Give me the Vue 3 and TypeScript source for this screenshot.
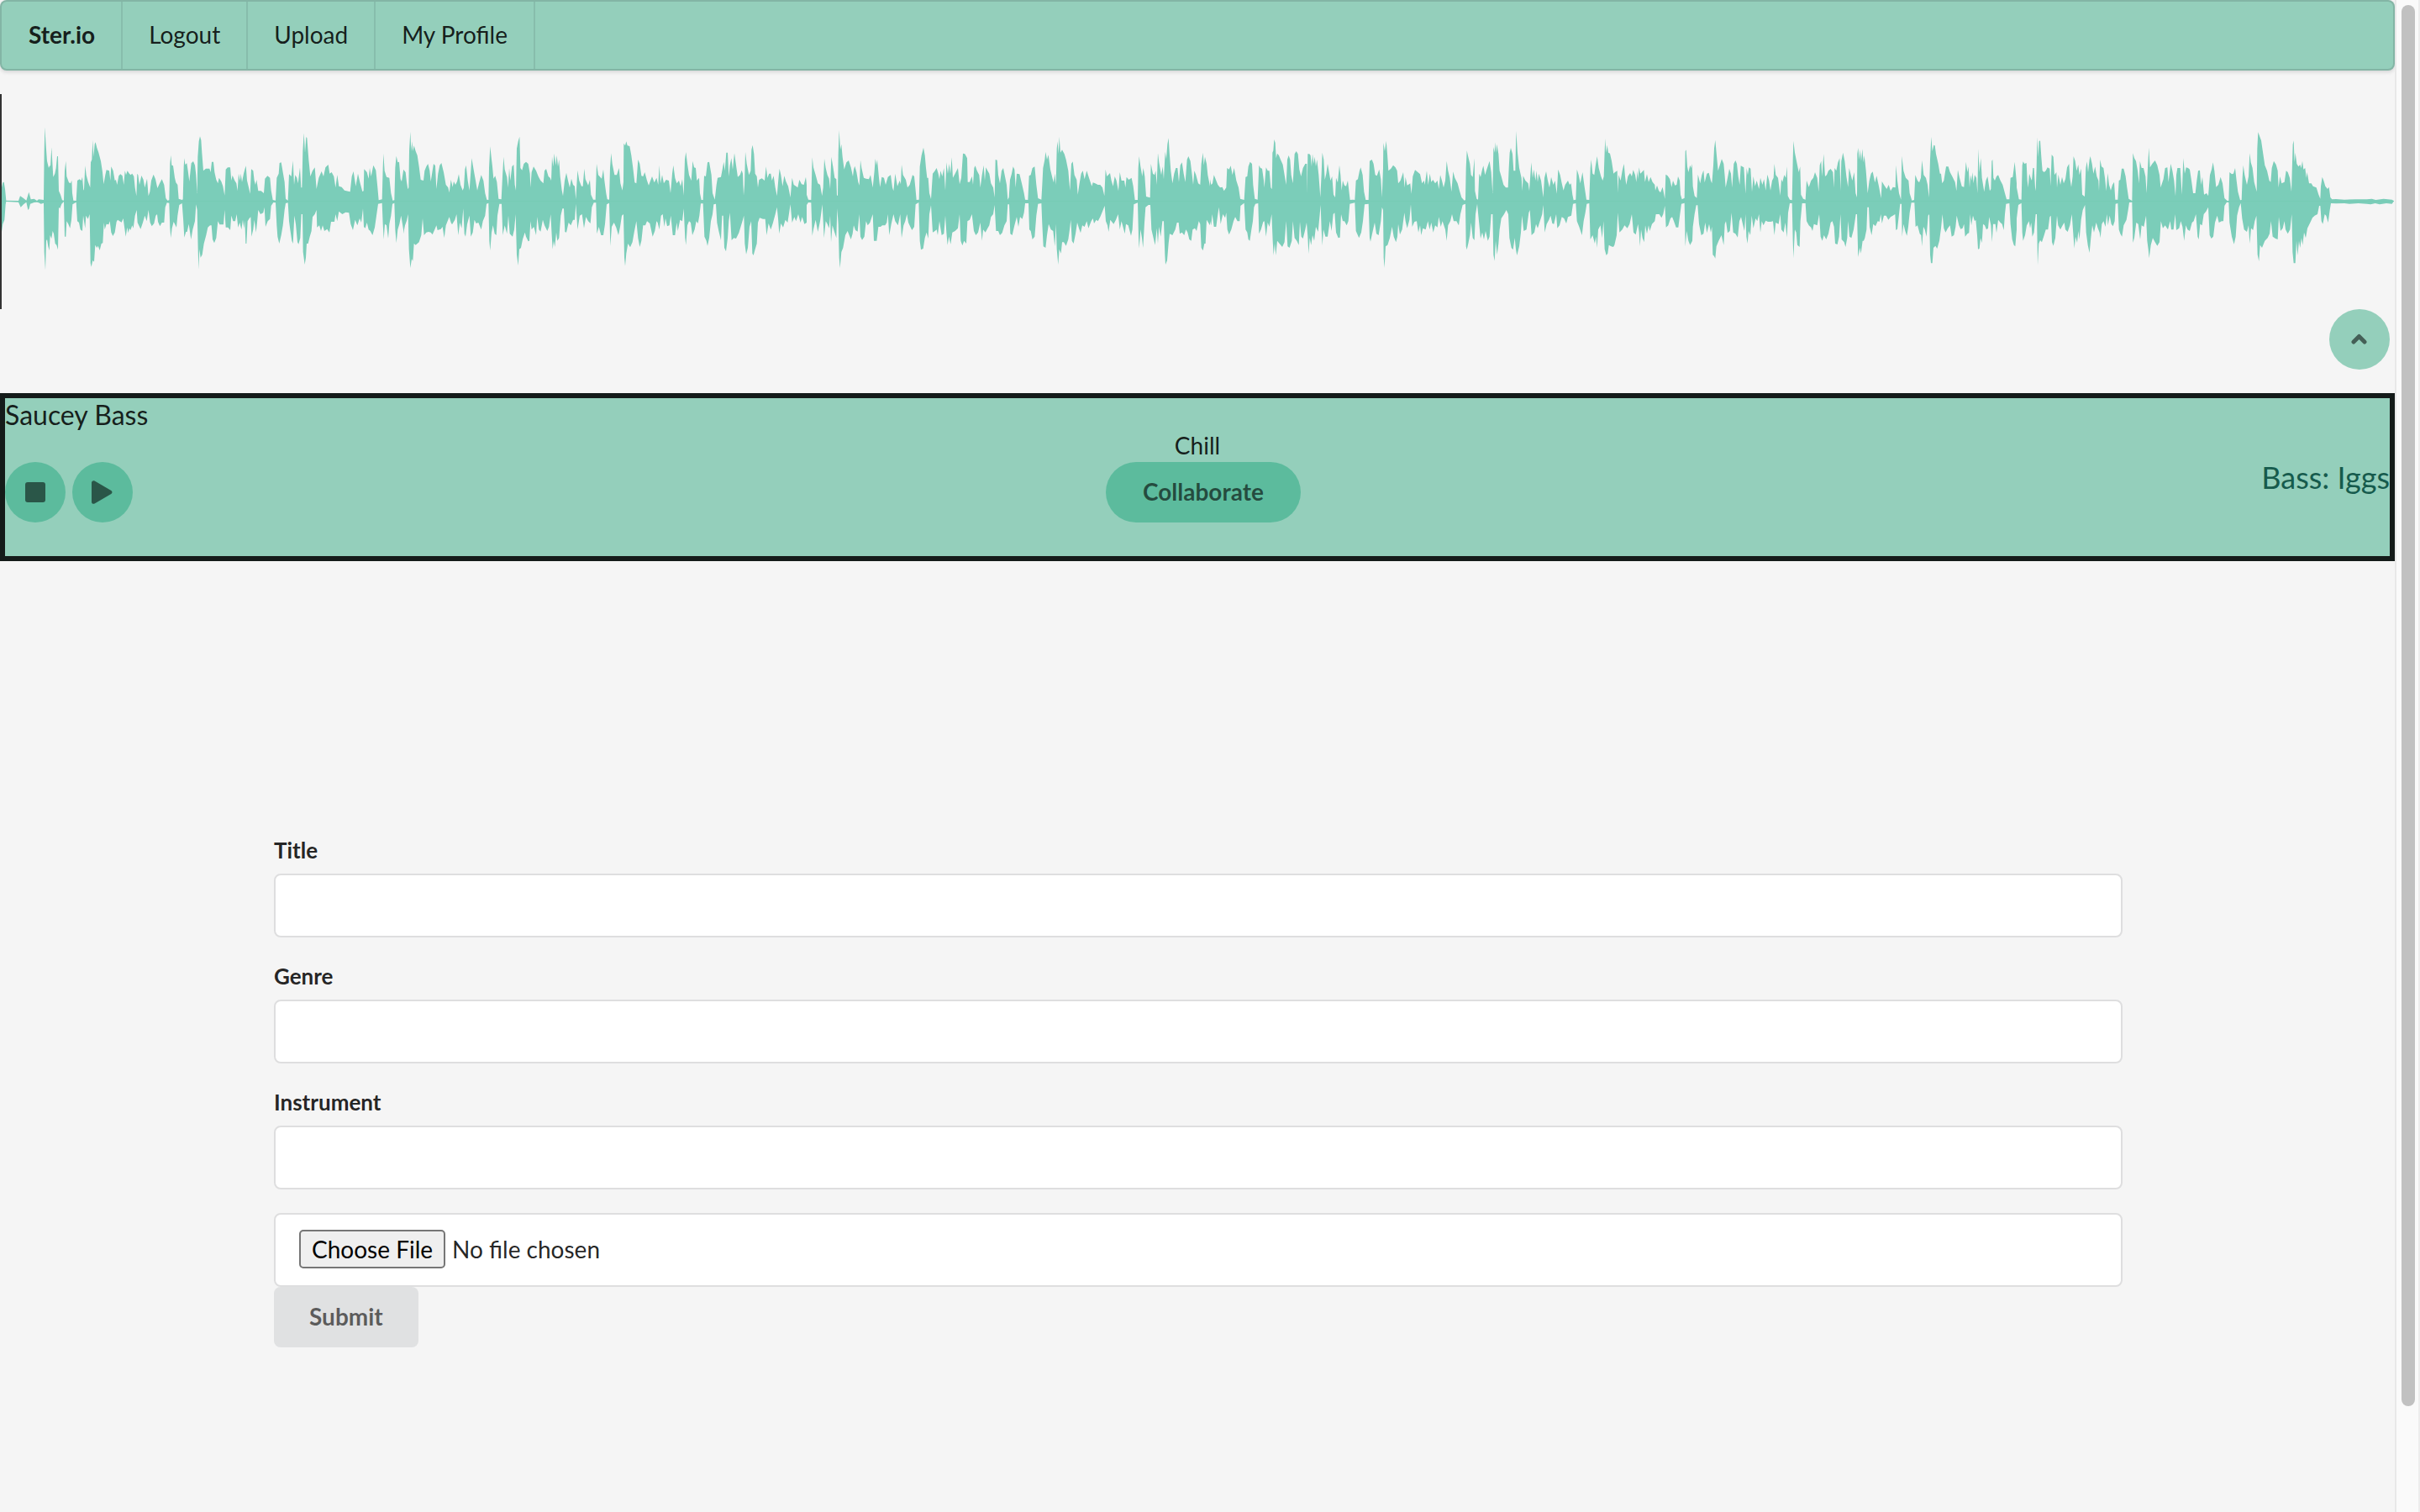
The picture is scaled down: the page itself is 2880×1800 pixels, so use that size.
<script setup lang="ts">
import { computed, ref } from 'vue'

interface Slice {
  top: string
  bottom: string
}

const navLinks = ['Logout', 'Upload', 'My Profile']

const title = ref('')
const genre = ref('')
const instrument = ref('')

const fields = [
  { id: 'title', label: 'Title', model: title },
  { id: 'genre', label: 'Genre', model: genre },
  { id: 'instrument', label: 'Instrument', model: instrument },
]

// Peaks of the track, in slices of 1440 units: upper and lower envelope as x,y pairs.
const SLICE = 1440
const slices: Slice[] = [
  {
    top: '6,250 10,232 14,230 18,255 22,296 66,297 72,280 84,288 94,296 103,266 110,292 122,290 132,297 138,292 156,294 158,120 160,34 164,100 168,155 174,180 178,170 180,175 184,106 187,160 190,212 196,200 200,180 204,138 207,138 210,262 216,275 222,295 228,296 231,190 235,155 238,210 246,232 252,235 256,224 258,270 262,296 272,297 276,225 284,220 290,225 294,212 298,260 300,256 304,172 308,205 314,228 322,250 324,160 328,150 331,80 334,140 338,95 341,88 346,108 352,125 360,155 366,195 370,238 376,205 380,187 390,190 394,225 397,175 404,190 410,225 414,222 418,240 424,208 430,202 437,208 442,240 446,190 450,205 455,190 460,198 466,205 472,200 478,210 482,250 487,280 490,200 493,205 498,240 505,207 512,222 517,250 525,218 530,280 535,265 540,225 548,203 555,220 562,252 570,235 578,220 586,240 592,288 598,296 604,295 607,165 610,134 613,170 618,172 624,215 628,232 634,240 638,290 650,294 653,292 656,175 658,145 661,168 667,163 671,190 676,228 680,190 683,163 690,156 696,170 700,205 704,270 706,140 710,85 714,67 718,80 721,125 726,190 735,182 748,182 752,195 756,158 762,158 766,195 772,222 778,235 782,215 790,228 796,245 802,278 806,185 813,178 822,178 826,225 830,206 838,225 844,235 848,262 852,200 857,225 860,200 864,230 870,200 874,185 878,172 882,225 888,250 893,272 897,184 904,190 908,225 912,240 916,222 922,262 932,262 942,270 946,218 955,208 964,215 968,260 974,294 984,296 988,215 995,200 998,162 1004,160 1010,195 1016,230 1020,290 1028,296 1032,202 1040,210 1046,154 1050,240 1054,205 1060,215 1064,235 1071,178 1075,250 1078,250 1081,120 1085,55 1089,125 1093,70 1096,72 1102,150 1108,210 1116,190 1124,178 1130,255 1138,215 1148,192 1155,210 1162,178 1172,168 1177,200 1184,195 1192,210 1198,250 1204,205 1210,245 1220,248 1230,260 1250,265 1256,210 1262,192 1270,245 1278,200 1286,235 1294,264 1298,262 1300,184 1310,195 1316,218 1320,180 1325,210 1333,170 1342,188 1348,250 1352,295 1364,292 1367,180 1369,128 1373,190 1380,212 1390,215 1396,270 1402,296 1408,295 1411,180 1415,137 1420,160 1425,158 1430,220 1434,228 1440,190',
    bottom: '6,408 10,380 16,365 20,310 22,300 66,302 74,320 84,310 94,302 100,330 104,325 108,308 122,303 132,302 138,304 146,308 156,305 158,480 162,545 165,440 168,435 172,460 176,475 179,420 184,432 188,405 192,415 197,450 202,455 207,472 210,320 214,325 220,308 228,300 231,425 235,425 238,370 244,380 250,395 255,365 259,310 272,302 276,370 282,375 287,400 294,405 297,350 300,370 304,395 307,350 314,362 320,345 323,520 326,533 331,510 336,515 340,455 346,465 350,458 356,474 362,450 367,448 371,375 374,400 380,380 388,382 392,370 397,410 403,423 410,410 416,372 420,365 434,374 440,360 444,390 449,425 454,392 458,412 462,395 466,402 472,385 476,395 482,350 488,330 491,375 502,398 510,375 517,350 524,370 530,330 536,375 542,388 550,378 556,350 561,345 564,372 571,388 578,375 586,375 590,320 596,304 604,305 607,395 610,430 614,395 620,372 630,392 634,350 640,312 650,306 654,360 658,428 664,408 668,408 674,380 682,435 688,400 696,370 700,310 704,330 707,470 709,542 712,470 716,500 722,490 728,450 736,420 742,392 750,385 755,385 759,435 765,448 772,430 778,370 784,382 798,382 802,330 806,392 814,392 822,402 826,350 832,370 840,370 845,345 850,392 856,375 862,400 867,365 871,395 874,368 877,450 880,450 884,370 890,360 895,355 898,425 904,400 908,365 914,410 918,375 922,330 930,345 940,340 944,320 948,390 956,370 964,362 968,315 976,303 984,304 988,385 991,425 997,450 1004,420 1010,385 1016,330 1020,306 1028,304 1032,370 1036,400 1042,440 1046,450 1051,350 1056,380 1062,445 1066,452 1072,430 1076,345 1080,345 1082,480 1088,525 1092,500 1095,450 1100,450 1106,425 1112,405 1116,355 1124,345 1130,330 1132,392 1140,385 1146,405 1152,385 1158,405 1168,398 1176,410 1182,372 1194,372 1198,345 1204,370 1210,335 1222,345 1234,338 1246,340 1252,380 1260,402 1268,365 1276,385 1284,360 1290,375 1296,325 1299,390 1304,395 1310,375 1316,400 1322,405 1330,420 1338,392 1344,350 1350,308 1364,305 1367,380 1370,435 1374,380 1380,385 1386,432 1390,380 1396,350 1401,308 1408,305 1411,400 1415,448 1420,400 1426,380 1432,350 1440,400',
  },
  {
    top: '0,185 8,195 12,230 16,255 19,250 21,120 25,50 28,120 31,85 34,120 38,100 44,120 50,135 56,175 62,222 72,225 76,190 82,175 88,165 94,190 98,228 104,190 108,165 114,172 118,255 124,200 130,170 136,162 144,195 152,240 160,250 164,268 170,222 176,248 180,228 186,240 192,228 198,202 204,240 212,260 216,250 220,185 224,170 230,225 236,260 241,190 244,145 250,180 258,225 264,260 270,235 278,205 286,225 292,270 298,293 304,294 306,180 310,103 314,140 318,175 322,218 328,208 334,230 340,290 350,292 354,210 358,140 362,185 370,212 374,250 378,180 382,225 388,175 394,168 398,240 402,260 405,110 410,85 415,68 418,180 424,188 430,165 438,158 446,165 452,200 454,250 458,195 465,175 474,190 482,210 490,225 500,235 504,190 510,183 518,210 524,215 528,225 531,140 535,175 539,128 544,170 548,135 552,175 556,150 560,210 566,260 570,280 576,225 582,197 588,225 594,250 600,218 606,240 612,245 616,292 622,188 628,225 636,245 641,245 646,182 650,220 660,242 666,222 670,275 678,293 686,293 690,165 696,205 708,218 714,185 718,225 724,270 728,292 735,293 738,180 742,127 746,165 754,205 762,205 770,180 775,235 782,260 786,230 787,92 792,100 796,85 800,100 808,102 814,135 820,180 826,232 832,235 838,150 844,165 850,208 856,210 862,195 870,225 876,242 888,210 896,232 904,215 910,240 914,170 918,235 924,205 930,235 938,222 948,225 954,270 960,200 964,170 970,215 976,235 984,225 990,245 996,220 1001,278 1005,150 1009,123 1014,165 1020,205 1028,225 1033,155 1038,178 1044,180 1048,225 1056,215 1059,270 1064,294 1070,294 1074,208 1080,210 1086,160 1092,158 1100,205 1104,270 1112,293 1118,240 1122,215 1134,212 1140,180 1144,158 1148,190 1153,125 1158,125 1162,210 1166,170 1171,145 1176,185 1182,127 1188,170 1194,212 1202,205 1208,188 1212,200 1215,278 1218,240 1221,122 1226,165 1234,205 1240,190 1243,115 1247,98 1252,130 1256,200 1262,210 1266,250 1270,222 1280,217 1290,225 1295,175 1300,215 1306,200 1312,200 1316,225 1322,208 1328,250 1334,280 1340,210 1343,182 1348,205 1354,245 1360,208 1366,228 1374,245 1382,285 1388,215 1394,240 1402,245 1408,250 1414,222 1422,238 1430,240 1437,212 1440,240',
    bottom: '0,415 6,385 12,368 17,345 20,470 25,537 30,505 34,512 38,450 44,455 56,445 64,420 69,360 74,420 82,410 90,408 98,410 104,418 112,400 118,385 122,402 134,398 140,390 146,430 152,385 164,355 170,375 174,382 184,365 190,345 196,420 202,375 208,395 214,325 218,415 222,425 228,380 236,350 241,425 248,410 254,365 260,378 268,375 278,400 284,370 292,350 297,308 304,305 307,440 310,475 315,410 320,385 326,415 332,420 336,350 343,308 351,308 355,420 362,385 370,415 375,350 380,415 390,425 396,400 401,345 405,490 410,528 414,470 420,465 426,435 434,410 438,425 446,442 450,440 454,370 458,400 466,390 474,420 478,355 484,400 490,407 498,365 504,385 514,405 520,390 526,345 530,420 533,470 537,440 541,462 546,410 550,440 556,430 562,350 568,325 573,325 577,408 582,410 590,375 598,385 606,365 612,365 616,308 622,400 630,350 638,345 645,395 652,355 660,370 668,378 673,320 680,304 688,304 691,415 698,390 706,420 714,420 720,380 726,310 735,305 739,458 744,390 752,375 760,392 768,420 774,390 780,350 786,345 789,500 792,530 796,485 802,450 810,463 818,445 824,410 832,370 838,430 844,462 850,440 856,385 864,385 870,370 880,378 890,425 898,405 904,370 908,375 914,400 920,350 926,345 932,390 936,360 942,388 950,385 955,350 962,420 970,420 976,375 980,405 988,365 996,370 1001,325 1006,430 1009,455 1014,385 1020,370 1026,375 1032,420 1040,400 1046,370 1052,378 1057,350 1062,307 1070,307 1075,425 1082,440 1086,458 1092,430 1098,370 1104,345 1108,310 1116,308 1120,375 1126,405 1134,438 1138,350 1142,350 1146,465 1152,478 1158,430 1162,370 1166,340 1172,438 1180,430 1188,432 1198,412 1206,385 1212,365 1216,350 1219,450 1224,488 1230,465 1236,390 1242,370 1246,485 1250,492 1256,470 1262,450 1266,375 1272,358 1284,362 1292,362 1297,420 1304,378 1312,400 1320,375 1328,345 1334,320 1338,360 1342,415 1348,378 1356,392 1364,365 1372,375 1382,310 1388,375 1396,355 1402,370 1410,345 1418,375 1424,355 1432,380 1440,375',
  },
  {
    top: '0,275 6,293 16,294 20,142 24,178 32,205 40,235 48,240 55,280 59,250 63,147 68,180 74,205 80,218 84,255 88,140 94,175 100,215 106,220 108,278 111,278 113,130 116,45 120,115 124,95 128,140 134,185 142,160 150,153 158,178 165,210 168,185 172,173 178,195 184,230 188,242 190,205 192,152 196,180 204,215 212,218 222,220 228,205 236,250 242,190 245,147 249,170 252,150 258,215 262,248 268,212 276,215 282,240 290,212 300,205 306,250 310,262 316,200 324,245 332,225 336,238 339,168 344,205 354,222 360,250 368,240 378,205 384,210 388,250 392,294 401,293 404,175 410,135 417,107 422,135 426,180 430,215 434,215 438,270 444,291 450,200 458,190 464,180 470,200 474,220 478,190 484,210 490,180 495,260 499,160 504,200 509,165 513,200 518,142 522,215 530,200 540,180 546,238 552,215 558,128 565,130 573,145 575,230 582,230 590,210 594,240 598,180 602,172 608,190 616,205 620,250 626,205 632,170 636,225 640,178 646,190 652,200 658,235 666,250 671,285 674,150 680,152 684,205 690,235 696,190 702,180 708,210 714,240 718,293 722,285 726,222 732,200 737,175 742,185 746,250 750,200 760,202 768,235 776,270 780,293 790,294 794,208 800,205 806,180 814,175 820,240 826,288 838,293 841,240 844,180 850,150 853,122 858,150 863,133 870,185 878,218 882,232 886,200 890,240 893,110 896,85 899,130 902,68 906,125 912,115 920,130 926,150 934,190 940,260 945,165 950,157 956,205 964,222 968,275 974,235 980,200 986,190 992,220 1000,190 1008,215 1018,245 1022,232 1030,235 1040,240 1048,240 1056,250 1063,280 1067,185 1072,210 1083,198 1088,225 1094,245 1100,210 1106,225 1113,262 1118,195 1124,225 1134,225 1138,250 1142,212 1150,222 1160,215 1166,245 1172,294 1182,294 1184,180 1187,138 1192,175 1198,210 1202,180 1207,210 1212,282 1226,286 1229,165 1236,200 1242,205 1246,190 1250,240 1254,127 1258,160 1266,205 1271,175 1275,220 1280,122 1284,148 1288,95 1292,73 1296,135 1300,190 1306,235 1312,200 1318,180 1324,180 1329,230 1334,170 1340,160 1346,200 1352,230 1358,150 1363,138 1370,155 1376,205 1380,240 1384,190 1390,205 1398,235 1405,240 1409,165 1415,125 1418,170 1422,140 1428,165 1432,205 1440,245',
    bottom: '0,312 6,303 16,304 20,422 24,400 32,365 40,408 48,370 56,310 62,430 68,370 74,380 80,395 84,350 87,445 92,385 98,405 106,430 109,325 113,380 116,500 119,537 124,480 130,465 138,420 146,405 158,435 164,415 168,385 174,402 182,407 188,345 192,425 198,437 206,425 212,370 218,385 226,375 236,345 240,440 250,440 256,390 264,390 270,385 280,385 286,375 290,345 295,420 302,380 310,345 316,370 326,385 334,345 339,430 346,385 352,370 358,345 363,375 370,390 376,402 384,390 389,310 400,303 404,440 408,472 416,468 422,430 428,410 434,432 438,345 444,313 450,410 458,405 464,400 468,420 474,370 482,420 490,415 495,350 499,410 503,455 508,425 514,452 520,410 530,405 540,395 546,345 550,440 556,457 562,440 570,450 574,370 582,365 590,345 597,405 604,420 612,410 620,375 626,440 630,400 638,410 646,395 652,385 658,355 666,345 671,312 676,405 684,405 690,420 698,412 706,385 714,370 718,310 723,310 727,415 734,420 742,385 750,355 756,390 762,355 770,362 776,340 780,306 792,306 795,400 800,405 806,435 814,425 820,350 826,308 838,306 841,380 845,460 853,465 858,420 864,380 872,400 880,405 886,460 890,380 893,470 898,525 902,470 908,485 912,445 918,445 926,458 934,435 939,400 943,365 947,440 953,450 960,415 966,375 972,395 978,412 984,385 992,390 1000,370 1006,395 1016,370 1022,360 1026,378 1034,365 1040,370 1048,355 1056,335 1064,315 1068,370 1074,385 1078,408 1084,365 1096,380 1104,365 1112,345 1118,400 1124,370 1132,400 1136,415 1140,380 1148,385 1158,422 1163,400 1168,310 1182,304 1185,430 1187,467 1192,400 1197,430 1201,465 1206,375 1210,320 1220,312 1227,312 1231,400 1238,430 1244,455 1250,395 1254,450 1258,390 1264,425 1270,370 1275,370 1279,490 1281,525 1287,510 1292,450 1296,415 1306,420 1316,400 1322,375 1328,375 1332,415 1340,410 1348,420 1354,400 1360,410 1366,435 1373,440 1378,400 1386,395 1392,405 1400,370 1405,380 1409,465 1415,475 1420,450 1424,450 1428,365 1440,385',
  },
  {
    top: '0,220 4,240 9,235 14,205 20,220 28,240 36,250 44,248 50,262 58,250 61,180 68,185 74,172 80,205 86,180 94,225 102,250 108,290 122,294 127,212 133,210 137,175 143,158 150,165 154,240 160,290 170,293 175,170 180,180 186,182 192,225 194,250 200,178 206,190 212,190 217,250 221,255 223,125 226,118 229,78 233,90 236,145 240,128 246,135 252,150 260,168 266,205 272,240 276,150 281,135 286,150 290,205 296,235 302,130 308,120 314,130 319,185 325,210 332,180 340,165 346,165 347,270 349,130 355,130 359,135 363,175 366,130 370,165 374,140 378,175 382,150 388,205 394,285 398,200 401,125 406,150 410,222 415,200 420,165 426,200 430,225 436,210 441,275 447,285 450,215 456,232 462,170 466,205 470,260 474,225 480,242 486,245 492,225 496,260 500,294 510,293 517,294 521,225 528,220 534,190 538,178 545,205 550,265 556,294 566,294 570,155 578,150 584,165 590,205 596,208 604,185 610,220 614,285 618,180 619,90 624,120 629,83 633,130 637,190 646,182 654,170 662,178 668,190 672,235 680,225 690,195 695,250 698,212 704,242 715,235 719,272 724,210 732,187 742,195 750,202 757,235 764,225 767,240 774,190 779,240 785,200 790,230 796,222 804,235 812,225 817,255 822,205 828,225 834,250 840,225 845,155 850,190 856,215 862,265 868,193 874,215 884,235 892,265 898,285 908,296 912,294 914,180 917,118 922,140 928,165 932,205 938,212 944,145 946,262 952,290 957,293 961,200 966,212 972,185 976,172 982,205 988,185 998,155 1004,195 1009,270 1012,105 1016,125 1018,88 1021,125 1024,95 1030,130 1034,190 1040,210 1048,240 1056,250 1064,250 1067,180 1070,125 1074,108 1080,130 1084,190 1090,190 1093,48 1098,125 1104,180 1112,215 1115,262 1118,208 1126,225 1136,235 1140,262 1147,160 1152,215 1156,185 1162,225 1166,190 1170,230 1174,200 1182,225 1190,285 1194,215 1200,192 1206,225 1212,250 1218,212 1226,240 1232,225 1238,272 1243,185 1250,205 1256,235 1262,260 1268,240 1278,225 1284,240 1289,235 1294,275 1298,295 1306,293 1310,185 1316,205 1322,235 1330,195 1336,240 1344,293 1354,294 1358,180 1361,150 1366,200 1372,205 1376,175 1382,138 1388,180 1396,210 1402,225 1406,210 1409,120 1411,75 1414,125 1418,98 1422,125 1428,128 1434,155 1440,195',
    bottom: '0,370 4,385 8,345 14,390 22,390 28,345 32,320 38,380 46,345 54,358 58,340 62,400 68,418 76,400 84,370 90,355 98,370 106,370 109,315 122,305 127,400 133,410 137,435 142,440 148,400 153,370 157,320 162,308 172,306 175,415 182,400 190,372 194,370 200,425 206,375 212,390 220,345 224,440 227,492 231,450 235,492 240,440 248,450 258,462 266,445 272,370 277,460 284,465 292,440 296,370 302,430 310,440 317,455 321,372 326,425 332,432 340,400 345,375 349,425 352,487 356,430 361,455 366,420 372,440 378,390 386,408 392,345 395,312 398,400 401,457 405,400 412,425 420,425 428,370 434,405 440,345 445,340 450,410 458,430 464,428 468,345 474,370 480,370 488,385 494,370 499,308 517,304 521,405 532,430 540,410 546,370 552,310 566,308 570,430 573,443 580,410 588,375 594,415 602,420 610,370 614,320 618,330 620,500 623,537 627,460 634,455 642,430 650,390 656,425 664,445 669,425 672,380 678,418 686,400 694,340 698,370 704,395 712,365 717,310 722,390 730,372 738,370 744,410 750,385 754,420 760,395 770,400 778,370 784,400 790,375 797,410 804,385 812,392 817,355 824,390 830,370 840,400 845,440 850,385 858,370 864,345 870,370 880,370 888,385 894,345 902,312 912,308 914,460 917,472 922,450 928,420 932,375 938,430 944,438 948,345 954,308 960,370 966,432 972,410 978,435 984,405 992,440 998,425 1004,345 1009,345 1012,490 1016,512 1020,440 1025,490 1030,450 1034,400 1040,360 1050,345 1058,330 1065,345 1069,430 1076,465 1082,472 1088,430 1092,470 1096,492 1104,460 1110,410 1114,350 1120,405 1130,400 1138,340 1142,330 1148,420 1158,410 1164,380 1170,395 1178,370 1186,345 1190,312 1195,410 1202,380 1210,365 1216,350 1222,378 1228,380 1236,345 1240,395 1248,385 1256,355 1264,360 1272,378 1278,355 1290,350 1296,308 1306,306 1310,370 1318,390 1328,420 1334,370 1340,340 1345,308 1354,306 1358,435 1366,420 1374,450 1378,425 1382,465 1386,400 1394,385 1400,430 1405,370 1409,470 1415,492 1420,485 1424,455 1432,460 1440,462',
  },
  {
    top: '0,200 6,195 14,190 16,268 19,205 26,225 32,190 38,165 42,210 46,240 52,210 60,198 66,210 71,187 78,205 82,230 86,190 88,220 92,178 96,200 102,195 109,187 113,230 120,202 126,230 133,212 140,230 148,240 150,260 156,242 162,260 168,268 176,248 184,290 187,203 194,208 202,220 208,248 213,225 220,242 226,240 231,210 237,225 240,275 245,292 254,287 257,120 260,115 264,175 268,195 274,170 278,180 281,165 284,245 290,280 298,287 302,203 310,235 316,205 322,188 326,232 334,200 341,197 348,225 352,235 357,170 360,110 364,80 368,125 374,190 380,170 387,148 394,165 398,210 401,250 408,215 414,183 420,200 424,250 430,165 436,153 441,165 446,210 451,240 455,172 466,178 472,272 476,180 480,205 484,178 490,182 495,265 500,210 506,245 512,225 520,255 525,215 532,240 538,220 544,260 550,203 556,225 561,260 567,225 572,215 575,165 580,205 588,215 596,278 600,220 604,230 610,205 616,215 620,175 623,280 630,293 638,295 641,150 643,83 648,125 656,165 662,195 667,175 670,275 678,290 686,293 690,225 698,248 706,225 714,215 720,195 728,215 733,265 737,170 742,155 745,210 751,130 756,210 762,205 768,190 776,183 784,195 788,250 790,180 796,190 802,160 808,145 811,262 814,155 820,125 826,155 832,210 838,248 842,180 848,205 853,225 860,195 865,270 870,285 871,130 874,108 878,150 881,115 885,155 889,112 893,160 896,135 902,190 908,270 914,225 920,200 926,193 934,232 940,208 948,245 956,288 959,228 966,240 976,255 983,240 990,262 998,248 1007,250 1009,170 1014,225 1020,270 1027,293 1030,137 1036,190 1044,215 1054,225 1058,270 1066,296 1074,294 1078,205 1086,225 1092,232 1098,215 1102,152 1108,205 1116,215 1122,240 1127,285 1131,150 1135,68 1139,120 1144,98 1148,100 1152,130 1160,165 1166,200 1170,200 1174,235 1180,225 1188,175 1196,175 1202,195 1210,210 1220,230 1225,262 1230,187 1236,215 1244,245 1252,248 1259,158 1264,195 1268,175 1272,250 1275,205 1279,225 1282,195 1286,235 1290,205 1296,215 1300,270 1303,112 1307,195 1312,145 1316,215 1324,265 1330,225 1336,210 1344,262 1348,255 1351,155 1354,150 1357,215 1362,225 1368,210 1374,205 1382,225 1390,240 1398,270 1404,292 1414,292 1418,215 1426,212 1433,158 1437,200 1440,235',
    bottom: '0,462 4,455 12,420 16,340 22,410 32,400 40,385 50,395 58,380 66,345 72,410 80,418 88,380 92,410 95,460 99,400 104,430 110,445 114,385 120,415 126,385 130,405 138,380 148,370 152,345 158,345 164,345 172,358 178,345 184,315 188,392 196,385 204,360 210,355 216,370 224,392 232,392 238,345 243,308 254,305 257,460 262,405 268,440 274,455 282,440 284,390 290,345 296,313 301,313 306,380 314,420 322,415 328,375 334,412 342,380 348,410 352,390 355,490 360,495 364,503 368,460 376,440 386,420 394,455 398,380 402,370 408,412 416,405 422,340 428,410 436,415 444,428 450,370 456,355 462,380 468,405 472,345 475,425 479,450 483,405 489,420 494,350 500,395 508,360 514,370 520,345 525,410 530,370 536,385 544,368 552,372 562,372 570,370 575,420 580,375 590,380 596,345 600,400 608,410 614,375 620,428 624,340 630,306 638,306 641,440 643,502 648,400 653,410 657,455 665,462 668,370 674,306 686,306 690,370 698,385 706,392 711,405 716,380 728,385 735,345 740,425 746,440 752,420 760,435 768,415 776,375 782,370 788,390 792,450 800,453 806,425 811,345 815,435 824,445 829,462 835,430 838,370 843,425 850,430 858,400 866,345 870,345 874,498 880,465 884,485 890,440 894,440 898,430 904,400 907,320 912,320 915,390 922,420 928,380 936,388 944,370 950,372 955,345 959,378 966,350 974,350 982,365 990,355 998,350 1006,345 1009,402 1014,398 1020,345 1024,308 1029,308 1031,425 1036,380 1042,405 1048,422 1053,390 1058,340 1064,304 1075,304 1079,390 1086,385 1094,415 1099,420 1102,460 1107,390 1112,400 1118,425 1124,350 1128,345 1131,490 1134,520 1139,520 1143,465 1150,458 1156,468 1164,440 1170,395 1175,345 1180,395 1186,410 1194,395 1202,385 1208,425 1216,420 1222,390 1226,350 1234,385 1240,398 1247,395 1252,380 1256,425 1264,415 1270,412 1274,345 1278,385 1284,350 1290,370 1294,365 1299,420 1302,470 1307,468 1311,430 1316,448 1320,380 1326,385 1332,400 1338,395 1342,355 1348,385 1352,445 1356,380 1364,380 1368,412 1374,365 1382,375 1388,380 1394,402 1398,345 1402,308 1414,306 1418,380 1424,435 1430,455 1435,460 1440,400',
  },
  {
    top: '0,250 5,275 8,292 17,293 20,170 23,157 28,165 35,162 38,225 41,250 45,200 50,215 54,225 58,180 62,180 66,250 68,262 71,180 73,70 77,140 80,85 84,82 88,140 92,190 98,195 104,190 110,178 118,182 121,245 125,132 131,140 135,205 142,195 144,250 149,203 156,240 162,212 168,235 174,220 180,178 187,165 190,215 195,248 200,210 203,138 209,155 214,190 220,168 224,205 230,182 234,275 243,282 247,180 251,157 255,195 260,150 263,138 269,165 274,200 280,175 286,210 292,225 294,262 298,150 303,175 310,180 315,215 320,262 325,198 330,240 336,260 342,240 348,230 352,293 361,293 365,225 370,222 375,182 382,182 389,210 394,250 400,290 412,297 415,127 420,145 426,155 432,190 437,235 440,155 446,180 453,180 460,210 464,270 468,180 472,107 476,178 484,165 494,153 502,170 510,205 514,250 524,220 530,180 538,178 542,230 550,165 556,190 562,225 567,280 570,205 574,180 584,180 590,275 595,145 600,200 605,178 612,180 618,185 624,225 630,270 638,270 643,225 648,190 654,188 658,240 663,212 669,275 678,270 684,280 690,205 696,185 701,160 706,190 712,248 720,240 728,212 735,235 742,288 752,297 757,297 760,195 768,202 774,200 780,180 785,225 790,265 798,295 803,294 806,215 809,170 814,205 822,240 828,210 832,127 836,160 842,180 848,230 857,265 859,110 862,52 868,68 873,82 880,130 886,170 894,190 902,225 907,230 911,180 918,155 926,168 932,190 935,250 940,210 946,235 956,230 962,190 968,195 975,215 981,265 984,160 986,95 989,82 992,160 995,125 1000,165 1006,175 1012,168 1016,180 1020,155 1024,185 1030,180 1034,215 1037,195 1044,235 1052,235 1058,245 1070,250 1078,275 1084,290 1086,245 1091,212 1096,225 1102,245 1110,255 1115,248 1120,285 1126,292 1140,291 1170,293 1210,292 1250,292 1268,290 1282,294 1310,290 1340,293 1347,298',
    bottom: '0,360 6,312 17,305 20,410 23,440 30,420 36,385 44,370 48,395 52,375 56,425 62,410 68,345 72,345 75,527 79,450 84,438 90,445 98,420 104,400 112,400 118,355 122,350 126,445 131,458 138,430 144,350 148,385 156,400 164,385 170,375 174,400 182,408 190,385 197,345 203,430 206,467 210,425 216,447 220,405 224,435 230,365 236,330 244,312 248,410 254,455 260,483 265,430 270,385 276,410 284,375 290,395 296,410 299,430 304,380 310,370 317,390 322,345 326,385 332,350 338,380 344,388 350,370 353,308 361,306 365,400 370,415 376,425 382,385 392,365 398,330 402,303 412,302 415,447 420,430 427,375 434,380 441,435 446,385 454,390 462,350 466,440 470,470 473,502 479,455 486,430 494,445 502,458 510,445 515,370 522,395 530,385 540,400 548,370 552,400 560,400 566,345 570,402 580,395 586,370 592,390 598,440 604,385 610,400 618,405 626,375 632,370 640,345 646,425 650,435 655,380 662,385 668,345 676,335 684,320 689,420 695,432 702,425 708,375 716,350 722,375 732,370 738,370 742,315 750,302 757,303 760,375 768,425 776,452 782,425 787,350 794,320 800,305 805,360 812,400 822,408 828,385 832,450 837,395 844,402 850,370 856,350 860,490 865,513 869,455 876,465 886,440 896,430 903,415 908,370 914,425 924,432 932,435 936,355 942,405 950,395 956,370 960,400 968,415 976,400 982,345 985,480 989,520 995,520 999,440 1003,492 1008,440 1012,465 1017,430 1021,455 1026,410 1032,430 1038,395 1048,375 1056,358 1064,350 1074,345 1080,315 1084,315 1088,370 1093,380 1100,345 1105,350 1112,375 1118,330 1122,306 1140,307 1170,306 1188,308 1220,306 1250,308 1264,310 1280,306 1296,310 1320,306 1340,308 1347,298',
  },
]

function envelope(side: keyof Slice): string[] {
  return slices.flatMap((slice, index) =>
    slice[side].split(' ').map((pair) => {
      const [x, y] = pair.split(',').map(Number)
      return `${x + index * SLICE} ${y}`
    }),
  )
}

const wavePath = computed(
  () => `M${[...envelope('top'), ...envelope('bottom').reverse()].join('L')}Z`,
)
</script>

<template>
  <div class="window">
    <div class="page">
      <nav class="menu">
        <a class="item brand" href="#">Ster.io</a>
        <a v-for="link in navLinks" :key="link" class="item" href="#">{{ link }}</a>
      </nav>

      <svg class="wave" viewBox="0 -84 8550 768" preserveAspectRatio="none" aria-hidden="true">
        <path :d="wavePath" fill="#7bcdb9" />
        <rect x="0" y="297" width="8547" height="3" fill="#76cbb5" />
        <rect x="0" y="-84" width="6" height="768" fill="#333" />
      </svg>

      <div class="collapse-row">
        <button class="circle pale" type="button" aria-label="Collapse">
          <svg width="20" height="14" viewBox="0 0 20 14">
            <path d="M3 10l6.500-6.500L16 10" fill="none" stroke="currentColor" stroke-width="5" stroke-linecap="round" stroke-linejoin="round" />
          </svg>
        </button>
      </div>

      <section class="track">
        <div class="left">
          <div class="track-title">Saucey Bass</div>
          <div class="controls">
            <button class="circle" type="button" aria-label="Stop">
              <svg width="28" height="28" viewBox="0 0 28 28">
                <rect x="2" y="2" width="24" height="24" rx="3" fill="currentColor" />
              </svg>
            </button>
            <button class="circle" type="button" aria-label="Play">
              <svg width="28" height="28" viewBox="0 0 28 28">
                <path d="M1 2.600C1 .6 3 -.4 4.600.6L24.300 12c1.600 1 1.600 3 0 4L4.600 27.400C3 28.400 1 27.400 1 25.400Z" fill="currentColor" />
              </svg>
            </button>
          </div>
        </div>
        <div class="middle">
          <div class="genre">Chill</div>
          <button class="pill" type="button">Collaborate</button>
        </div>
        <div class="artist">Bass: Iggs</div>
      </section>

      <form class="form" @submit.prevent>
        <div v-for="field in fields" :key="field.id" class="field">
          <label :for="field.id">{{ field.label }}</label>
          <input :id="field.id" v-model="field.model.value" type="text" />
        </div>
        <input class="file" type="file" aria-label="Track file" />
        <button class="submit" type="submit">Submit</button>
      </form>
    </div>

    <div class="scrollbar">
      <div class="thumb"></div>
    </div>
  </div>
</template>

<style>
body {
  background: #f5f5f5;
}
</style>

<style scoped>
* {
  box-sizing: border-box;
}

.window {
  display: flex;
  min-height: 100vh;
  font-family: Lato, "Liberation Sans", sans-serif;
  font-size: 28px;
  line-height: 40px;
  color: rgba(0, 0, 0, 0.87);
}

.page {
  flex: 1;
  min-width: 0;
}

.menu {
  display: flex;
  height: 84px;
  margin-bottom: 28px;
  border: 2px solid rgba(34, 36, 38, 0.15);
  border-radius: 8px;
  background: #94cfbb;
  box-shadow: 0 2px 4px rgba(34, 36, 38, 0.15);
}

.item {
  display: flex;
  align-items: center;
  padding: 0 31px 2px;
  border-right: 2px solid rgba(34, 36, 38, 0.1);
  color: inherit;
  text-decoration: none;
}

.brand {
  padding-left: 32px;
  font-weight: 700;
}

.wave {
  display: block;
  width: 100%;
  height: 256px;
}

.collapse-row {
  display: flex;
  justify-content: flex-end;
  padding-right: 6px;
  margin-bottom: 28px;
}

button {
  display: flex;
  align-items: center;
  justify-content: center;
  height: 72px;
  padding: 0 42px 2px;
  border: 0;
  background: #5cbb9d;
  color: rgba(0, 0, 0, 0.6);
  font: inherit;
  font-weight: 700;
}

.circle {
  width: 72px;
  padding: 0;
  border-radius: 50%;
  color: rgba(0, 0, 0, 0.54);
}

.pale {
  background: #94cfbb;
}

.pill {
  padding: 0 44px 2px;
  margin-left: 14px;
  border-radius: 36px;
}

.track {
  display: grid;
  grid-template-columns: 1fr auto 1fr;
  height: 200px;
  border: 6px solid #141b19;
  background: #94cfbb;
}

.track-title {
  margin-bottom: 36px;
  font-size: 32px;
}

.controls {
  display: flex;
  gap: 8px;
}

.middle {
  display: flex;
  flex-direction: column;
  align-items: center;
  padding-top: 36px;
}

.artist {
  align-self: center;
  justify-self: end;
  font-size: 36px;
  color: #165b4d;
}

.form {
  max-width: 2202px;
  margin: 326px auto 0;
  padding-left: 2px;
}

.field {
  margin-bottom: 28px;
}

label {
  display: block;
  margin-bottom: 10px;
  font-size: 26px;
  line-height: 36px;
  font-weight: 700;
}

input {
  display: block;
  width: 100%;
  height: 76px;
  padding: 0 28px;
  border: 2px solid #dededf;
  border-radius: 8px;
  background: #fff;
  color: inherit;
  font: inherit;
}

.file {
  height: 88px;
  padding-top: 18px;
}

.file::file-selector-button {
  height: 46px;
  margin-right: 8px;
  padding: 0 13px;
  border: 2px solid #767676;
  border-radius: 5px;
  background: #efefef;
  color: #000;
  font: inherit;
}

.submit {
  border-radius: 8px;
  background: #e0e1e2;
}

.scrollbar {
  width: 30px;
  padding: 6px 4px 0 6px;
  border-left: 2px solid #e8e8e8;
  border-right: 2px solid #ededed;
  background: #fafafa;
}

.thumb {
  width: 16px;
  height: calc(93vh - 6px);
  border-radius: 8px;
  background: #c1c1c1;
}
</style>
